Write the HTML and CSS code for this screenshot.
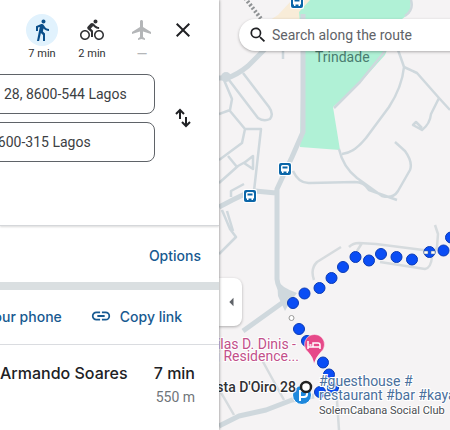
FILE: index.html
```html
<!DOCTYPE html>
<html lang="en">
<head>
  <meta charset="UTF-8">
  <title>Directions</title>
  <meta name="viewport" content="width=device-width, initial-scale=1.0">
  <link rel="stylesheet" href="styles.css">
</head>
<body>
  <div class="app">
    <div class="panel">
      <div class="directions">
        <div class="modes">
          <button class="mode active" type="button" aria-label="Walking">
            <span class="mode-icon"><svg viewBox="0 0 24 24"><path d="M13.5 5.5c1.1 0 2-.9 2-2s-.9-2-2-2-2 .9-2 2 .9 2 2 2zM9.8 8.9L7 23h2.1l1.8-8 2.1 2v6h2v-7.5l-2.1-2 .6-3C14.8 12 16.8 13 19 13v-2c-1.9 0-3.5-1-4.3-2.4l-1-1.6c-.4-.6-1-1-1.7-1-.3 0-.5.1-.8.1L6 8.3V13h2V9.6l1.8-.7"/></svg></span>
            <span>7 min</span>
          </button>
          <button class="mode" type="button" aria-label="Cycling">
            <span class="mode-icon"><svg viewBox="0 0 24 24"><path d="M15.5 5.5c1.1 0 2-.9 2-2s-.9-2-2-2-2 .9-2 2 .9 2 2 2zM5 12c-2.8 0-5 2.2-5 5s2.2 5 5 5 5-2.2 5-5-2.2-5-5-5zm0 8.5c-1.9 0-3.5-1.6-3.5-3.5s1.6-3.5 3.5-3.5 3.5 1.6 3.5 3.5-1.6 3.5-3.5 3.5zm5.8-10l2.4-2.4.8.8c1.3 1.3 3 2.1 5.1 2.1V9c-1.5 0-2.7-.6-3.6-1.5l-1.9-1.9c-.5-.4-1-.6-1.6-.6s-1.1.2-1.4.6L7.8 8.4c-.4.4-.6.9-.6 1.4 0 .6.2 1.1.6 1.4L11 14v5h2v-6.2l-2.2-2.3zM19 12c-2.8 0-5 2.2-5 5s2.2 5 5 5 5-2.2 5-5-2.2-5-5-5zm0 8.5c-1.9 0-3.5-1.6-3.5-3.5s1.6-3.5 3.5-3.5 3.5 1.6 3.5 3.5-1.6 3.5-3.5 3.5z"/></svg></span>
            <span>2 min</span>
          </button>
          <button class="mode disabled" type="button" aria-label="Flights">
            <span class="mode-icon"><svg viewBox="0 0 24 24"><path d="M21 16v-2l-8-5V3.5c0-.83-.67-1.5-1.5-1.5S10 2.67 10 3.5V9l-8 5v2l8-2.5V19l-2 1.5V22l3.5-1 3.5 1v-1.5L13 19v-5.5l8 2.5z"/></svg></span>
            <span class="no-time">—</span>
          </button>
          <button class="close" type="button" aria-label="Close directions">
            <svg viewBox="0 0 24 24"><path d="M19 6.4L17.6 5 12 10.6 6.4 5 5 6.4l5.6 5.6L5 17.6 6.4 19l5.6-5.6 5.6 5.6 1.4-1.4-5.6-5.6z"/></svg>
          </button>
        </div>
        <div class="waypoints">
          <div class="fields">
            <input class="origin" type="text" aria-label="Starting point" value="28, 8600-544 Lagos">
            <input class="destination" type="text" aria-label="Destination" value="8600-315 Lagos">
          </div>
          <button class="swap" type="button" aria-label="Reverse starting point and destination">
            <svg viewBox="0 0 24 24"><path d="M9 13V4M5 8l4-4 4 4M15 11v9M11 16l4 4 4-4"/></svg>
          </button>
        </div>
      </div>
      <div class="options"><a href="#">Options</a></div>
      <div class="share">
        <a class="send" href="#">your phone</a>
        <a class="copy" href="#">
          <svg viewBox="0 0 24 24"><path d="M3.9 12c0-1.7 1.4-3.1 3.1-3.1h4V7H7a5 5 0 0 0 0 10h4v-1.9H7c-1.7 0-3.1-1.4-3.1-3.1zM8 13h8v-2H8v2zm9-6h-4v1.9h4a3.1 3.1 0 0 1 0 6.2h-4V17h4a5 5 0 0 0 0-10z"/></svg>
          Copy link
        </a>
      </div>
      <div class="route">
        <div class="via">Armando Soares</div>
        <div class="trip">
          <div class="duration">7 min</div>
          <div class="distance">550 m</div>
        </div>
      </div>
    </div>

    <div class="map">
      <svg class="map-canvas" viewBox="219 0 231 430" preserveAspectRatio="xMinYMin slice">
        <defs>
          <g id="bus">
            <rect x="-7" y="-7" width="14" height="14" rx="2" fill="#fff"/>
            <rect x="-6" y="-6" width="12" height="12" rx="2" fill="#0b66a8"/>
            <path d="M-4-2.500q0-1.500 1.500-1.500h5q1.500 0 1.500 1.500v5h-1v1.500h-1.500v-1.500h-3v1.500h-1.500v-1.500h-1z" fill="#fff"/>
            <path d="M-2.500-2.500h5v2h-5z" fill="#0b66a8"/>
          </g>
        </defs>

        <!-- land -->
        <path d="M262 25l16-10 14-15h25v30h-55z" fill="#f8ecd8"/>
        <path d="M310 0h101l-1 13-12 9-13 33-27 30-25 22 7 43-40-3 2-100-3-35z" fill="#b0f1d6"/>

        <!-- roads -->
        <g class="roads">
          <path class="wide" d="M303 14v118l-11 25-15 32v90q1 10 8 15l8 14M219 78h8q10-3 21-12l18-18M219 207q15-8 28-14l8-2 21 2M282 303l-39 28M219 426l20-10 27-6 26-10 22-4"/>
          <path class="junction" d="M277 279q3 8 20 14l-7 9-5 9-7-15z"/>
          <circle class="junction" cx="226" cy="77" r="5"/>
          <path d="M229 80l29 38q6 4 12 1 4-5-1-12l-26-34M224 80l8 19-2 11-11 4M230 111l15 18-3 14-23 17M219 183l19-17 9-5M228 156l9 11M245 129h16l-7 62M244 163l9-7v13zM231 197v-6l13-7M227 211l6 20M222 210l8 19 6 8-17 17M283 59v-11"/>
          <path d="M398 50q4 11 6 17-2 20-15 40l-23 31q-12 15-24 16M385 51l-25 31-26 26M404 67l13 6 22 25-8 16q-1 10-9 16l-9-5 3-3 6 6M439 98l11 12M339 149q4 18 18 29l25 18q11 3 16-5l12-21q3-8-5-19l-10-9M293 171q6 13 17 12l45-1q9 0 14 8l28 10M411 0q3 10-6 16"/>
          <path class="mid" d="M314 280q-4-11 3-18l24-15M349 247q4-4 10-4l17 1 55 7M380 262l45 7q6-1 7-12l5-10 1-13-3-9M357 251l5-8M262 360l22 40M219 389l15 26M336 386l3 44"/>
        </g>
        <path d="M245-2l17 22" fill="none" stroke="#8f9294" stroke-width="4" stroke-dasharray="2 2"/>

        <use href="#bus" x="297" y="2"/>
        <use href="#bus" x="285" y="169"/>
        <use href="#bus" x="250" y="196"/>

        <circle cx="291.500" cy="318" r="2.500" fill="#fff" stroke="#999" />
        <text class="area" x="315" y="62">Trindade</text>

        <!-- walking route -->
        <g class="dots">
          <circle cx="293" cy="303" r="5.500"/>
          <circle cx="304.500" cy="293.500" r="5.500"/>
          <circle cx="319.500" cy="288" r="5.500"/>
          <circle cx="331.500" cy="278" r="5.500"/>
          <circle cx="343" cy="267" r="5.500"/>
          <circle cx="355.500" cy="257" r="5.500"/>
          <circle cx="369" cy="260.500" r="5.500"/>
          <circle cx="381" cy="254" r="5.500"/>
          <circle cx="396.500" cy="257" r="5.500"/>
          <circle cx="412" cy="259.500" r="5.500"/>
          <circle cx="429.500" cy="252" r="5.500"/>
          <circle cx="443.500" cy="250.500" r="5.500"/>
          <circle cx="451" cy="237.500" r="5.500"/>
          <circle cx="299" cy="329" r="5.500"/>
          <circle cx="307" cy="341" r="5.500"/>
          <circle cx="323" cy="362.500" r="5.500"/>
          <circle cx="329" cy="374.500" r="5.500"/>
          <circle cx="320" cy="392" r="5.500"/>
          <circle cx="333" cy="388" r="5.500"/>
        </g>
        <path d="M424 251h4v3h-4zM431 251h4v3h-4z" fill="#fff" stroke="#536a80" stroke-width=".5"/>
        <circle cx="333" cy="387" r="2.500" fill="#fff" stroke="#3470c4"/>

        <!-- places -->
        <path d="M314 364q-1-7-6-12a10 10 0 1 1 13 0q-5 5-7 12z" fill="#e64989" stroke="#fff" stroke-width=".5"/>
        <path d="M308 341v8M320 349v-4q0-2-2-2h-5v4M308 347h12M309.500 345h2" fill="none" stroke="#fff" stroke-width="1.500"/>
        <text class="hotel" x="296" y="349" text-anchor="end">Vilas D. Dinis -</text>
        <text class="hotel" x="299" y="361" text-anchor="end">g Residence...</text>

        <circle cx="302" cy="395" r="9.500" fill="#1e88dc" stroke="#fff"/>
        <path d="M300 401v-10h4q3 0 3 3t-3 3h-4" fill="none" stroke="#fff" stroke-width="2"/>
        <circle cx="306" cy="387" r="5" fill="#fff" stroke="#222" stroke-width="2.500"/>
        <text class="start" x="296" y="392" text-anchor="end">Costa D'Oiro 28</text>
        <text class="guest" x="319" y="386">#guesthouse #</text>
        <text class="guest" x="319" y="400">restaurant #bar #kayak</text>
        <text class="club" x="319" y="414">SolemCabana Social Club</text>
      </svg>

      <label class="search">
        <svg viewBox="0 0 24 24"><path d="M15.500 14h-.8l-.3-.3A6.500 6.500 0 1 0 13.700 14.400l.3.300v.8l5 5 1.500-1.500zm-6 0a4.500 4.500 0 1 1 0-9 4.500 4.500 0 0 1 0 9z"/></svg>
        <input type="text" placeholder="Search along the route" aria-label="Search along the route">
      </label>
      <button class="collapse" type="button" aria-label="Collapse side panel">
        <svg viewBox="0 0 8 12"><path d="M7 1v10L2 6z"/></svg>
      </button>
    </div>
  </div>
</body>
</html>
```
FILE: styles.css
```css
* {
  box-sizing: border-box;
}
body {
  margin: 0;
  font-family: Roboto, Arial, sans-serif;
  font-size: 14px;
  color: #202124;
  background-color: #fff;
}
button {
  margin: 0;
  padding: 0;
  border: 0;
  background: none;
  font: inherit;
  color: inherit;
  cursor: pointer;
}
a {
  color: #185a91;
  text-decoration: none;
}
svg {
  display: block;
  fill: currentColor;
}
.app {
  display: flex;
  min-height: 100vh;
  overflow: hidden;
}

/* side panel */
.panel {
  flex: none;
  width: 219px;
  overflow: hidden;
  background-color: #fff;
  position: relative;
  z-index: 1;
  box-shadow: 0 0 3px rgba(0, 0, 0, 0.5);
}
.directions {
  height: 226px;
  padding-top: 14px;
  border-bottom: 1px solid #d5d7da;
  box-shadow: 0 1px 2px rgba(0, 0, 0, 0.15);
}
.modes {
  display: flex;
  align-items: flex-start;
  padding-left: 17px;
}
.mode {
  width: 50px;
  font-size: 11px;
  line-height: 16px;
  color: #303134;
}
.mode-icon {
  display: flex;
  align-items: center;
  justify-content: center;
  width: 32px;
  height: 32px;
  margin: 0 auto;
  border-radius: 50%;
}
.mode svg {
  width: 24px;
  height: 24px;
}
.active .mode-icon {
  background-color: #e1f2fd;
  color: #0b4f8a;
}
.disabled {
  color: #b4b6b8;
}
.no-time {
  font-size: 14px;
}
.close svg {
  width: 24px;
  height: 24px;
}
.close {
  padding: 4px;
}
.waypoints {
  display: flex;
  align-items: center;
  margin-top: 10px;
}
.fields {
  display: flex;
  flex-direction: column;
  gap: 8px;
  width: 167px;
  margin-left: -12px;
}
.fields input {
  width: 100%;
  height: 40px;
  border: 1px solid #5f6368;
  border-radius: 8px;
  font: inherit;
  color: #3c4043;
  outline: none;
}
.origin {
  padding: 0 0 0 15px;
}
.destination {
  padding: 0 0 0 1px;
}
.swap {
  margin-left: 16px;
}
.swap svg {
  width: 24px;
  height: 24px;
  fill: none;
  stroke: currentColor;
  stroke-width: 2;
}
.options,
.share,
.route {
  font-family: Inter, Roboto, sans-serif;
  font-weight: 500;
}
.options {
  display: flex;
  align-items: center;
  justify-content: flex-end;
  height: 56px;
  padding: 2px 18px 0 0;
}
.share {
  display: flex;
  align-items: center;
  justify-content: flex-end;
  gap: 28px;
  height: 63px;
  padding: 0 37px 2px 0;
  border-top: 8px solid #dadfe1;
  border-bottom: 1px solid #dadce0;
  white-space: nowrap;
}
.copy {
  display: flex;
  align-items: center;
  gap: 8px;
}
.copy svg {
  width: 22px;
  height: 22px;
}
.route {
  display: flex;
  justify-content: space-between;
  padding: 16px 24px 16px 0;
  font-size: 16px;
  line-height: 24px;
  white-space: nowrap;
}
.trip {
  text-align: right;
}
.distance {
  font-family: Roboto, Arial, sans-serif;
  font-size: 14px;
  font-weight: 400;
  color: #70757a;
}

/* map */
.map {
  flex: 1;
  position: relative;
  overflow: hidden;
  background-color: #f5f3f4;
}
.map-canvas {
  position: absolute;
  top: 0;
  left: 0;
  width: 100%;
  height: 100%;
}
.map-canvas text {
  font-size: 14px;
  stroke: #fff;
  stroke-width: 2px;
  paint-order: stroke;
}
.roads path {
  fill: none;
  stroke: #cfd8dd;
  stroke-width: 2.5;
  stroke-linejoin: round;
}
.roads .wide {
  stroke-width: 5;
}
.roads .mid {
  stroke: #d6dbde;
}
.roads .junction {
  fill: #cfd8dd;
  stroke: none;
}
.dots {
  fill: #0a4df5;
  stroke: #0b3bb5;
}
.map-canvas .area {
  fill: #4a7c70;
  stroke: none;
}
.hotel {
  fill: #c2508a;
}
.start {
  fill: #303134;
  font-weight: 500;
}
.guest {
  fill: #4a6f9c;
}
.map-canvas .club {
  fill: #4a4d51;
  font-size: 11px;
}
.search {
  position: absolute;
  top: 19px;
  left: 20px;
  right: -20px;
  display: flex;
  align-items: center;
  gap: 4px;
  height: 32px;
  padding-left: 9px;
  border-radius: 16px;
  background-color: #fff;
  box-shadow: 0 1px 3px rgba(0, 0, 0, 0.3);
}
.search svg {
  flex: none;
  width: 20px;
  height: 20px;
}
.search input {
  flex: 1;
  min-width: 0;
  padding: 0;
  border: 0;
  outline: none;
  background: none;
  font: inherit;
}
.search input::placeholder {
  color: #5f6368;
}
.collapse {
  position: absolute;
  top: 278px;
  left: 0;
  width: 23px;
  height: 48px;
  padding-left: 8px;
  border-radius: 0 8px 8px 0;
  background-color: #fff;
  color: #5f6368;
  box-shadow: 0 1px 3px rgba(0, 0, 0, 0.3);
}
.collapse svg {
  width: 8px;
  height: 10px;
}
```
